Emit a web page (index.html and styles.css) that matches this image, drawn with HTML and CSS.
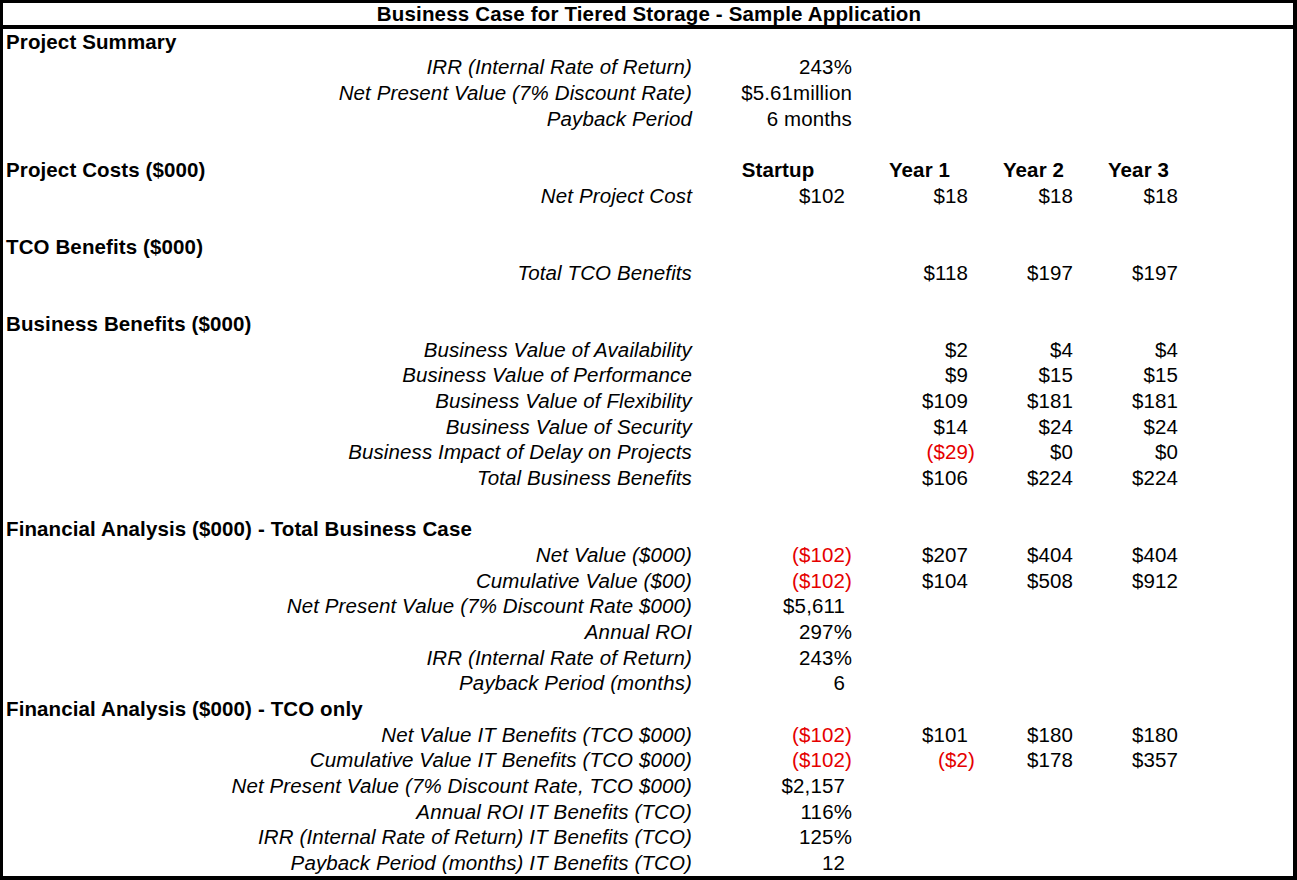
FILE: index.html
```html
<!DOCTYPE html>
<html>
<head>
<meta charset="utf-8">
<link rel="stylesheet" href="styles.css">
</head>
<body>
<div class="sheet">
  <div class="title">Business Case for Tiered Storage - Sample Application</div>
  <div class="grid">
    <div class="sec">Project Summary</div>
    <div class="lbl">IRR (Internal Rate of Return)</div><div class="v c1">243%</div><div class="e"></div>
    <div class="lbl">Net Present Value (7% Discount Rate)</div><div class="v c1">$5.61million</div><div class="e"></div>
    <div class="lbl">Payback Period</div><div class="v c1">6 months</div><div class="e"></div>
    <div class="blank"></div>

    <div class="sec2">Project Costs ($000)</div><div class="hd c1">Startup</div><div class="hd">Year 1</div><div class="hd">Year 2</div><div class="hd">Year 3</div><div></div>
    <div class="lbl">Net Project Cost</div><div class="v acc">$102</div><div class="v acc">$18</div><div class="v acc">$18</div><div class="v acc">$18</div><div></div>
    <div class="blank"></div>

    <div class="sec">TCO Benefits ($000)</div>
    <div class="lbl">Total TCO Benefits</div><div class="v"></div><div class="v acc">$118</div><div class="v acc">$197</div><div class="v acc">$197</div><div></div>
    <div class="blank"></div>

    <div class="sec">Business Benefits ($000)</div>
    <div class="lbl">Business Value of Availability</div><div class="v"></div><div class="v acc">$2</div><div class="v acc">$4</div><div class="v acc">$4</div><div></div>
    <div class="lbl">Business Value of Performance</div><div class="v"></div><div class="v acc">$9</div><div class="v acc">$15</div><div class="v acc">$15</div><div></div>
    <div class="lbl">Business Value of Flexibility</div><div class="v"></div><div class="v acc">$109</div><div class="v acc">$181</div><div class="v acc">$181</div><div></div>
    <div class="lbl">Business Value of Security</div><div class="v"></div><div class="v acc">$14</div><div class="v acc">$24</div><div class="v acc">$24</div><div></div>
    <div class="lbl">Business Impact of Delay on Projects</div><div class="v"></div><div class="v neg">($29)</div><div class="v acc">$0</div><div class="v acc">$0</div><div></div>
    <div class="lbl">Total Business Benefits</div><div class="v"></div><div class="v acc">$106</div><div class="v acc">$224</div><div class="v acc">$224</div><div></div>
    <div class="blank"></div>

    <div class="sec">Financial Analysis ($000) - Total Business Case</div>
    <div class="lbl">Net Value ($000)</div><div class="v neg">($102)</div><div class="v acc">$207</div><div class="v acc">$404</div><div class="v acc">$404</div><div></div>
    <div class="lbl">Cumulative Value ($00)</div><div class="v neg">($102)</div><div class="v acc">$104</div><div class="v acc">$508</div><div class="v acc">$912</div><div></div>
    <div class="lbl">Net Present Value (7% Discount Rate $000)</div><div class="v acc">$5,611</div><div class="e"></div>
    <div class="lbl">Annual ROI</div><div class="v">297%</div><div class="e"></div>
    <div class="lbl">IRR (Internal Rate of Return)</div><div class="v">243%</div><div class="e"></div>
    <div class="lbl">Payback Period (months)</div><div class="v acc">6</div><div class="e"></div>

    <div class="sec">Financial Analysis ($000) - TCO only</div>
    <div class="lbl">Net Value IT Benefits (TCO $000)</div><div class="v neg">($102)</div><div class="v acc">$101</div><div class="v acc">$180</div><div class="v acc">$180</div><div></div>
    <div class="lbl">Cumulative Value IT Benefits (TCO $000)</div><div class="v neg">($102)</div><div class="v neg">($2)</div><div class="v acc">$178</div><div class="v acc">$357</div><div></div>
    <div class="lbl">Net Present Value (7% Discount Rate, TCO $000)</div><div class="v acc">$2,157</div><div class="e"></div>
    <div class="lbl">Annual ROI IT Benefits (TCO)</div><div class="v">116%</div><div class="e"></div>
    <div class="lbl">IRR (Internal Rate of Return) IT Benefits (TCO)</div><div class="v">125%</div><div class="e"></div>
    <div class="lbl">Payback Period (months) IT Benefits (TCO)</div><div class="v acc">12</div><div class="e"></div>
  </div>
</div>
</body>
</html>
```

FILE: styles.css
```css
html, body {
  margin: 0;
  padding: 0;
  background: #fff;
}
body {
  font-family: "Liberation Sans", Arial, sans-serif;
  font-size: 20.5px;
  letter-spacing: 0.12px;
  color: #000;
}
.sheet {
  box-sizing: border-box;
  width: 1297px;
  height: 880px;
  border-style: solid;
  border-color: #000;
  border-width: 3px 4px 4px 3px;
  display: flex;
  flex-direction: column;
  overflow: hidden;
}
.title {
  height: 22px;
  border-bottom: 4px solid #000;
  font-weight: bold;
  text-align: center;
  line-height: 22px;
  letter-spacing: 0.17px;
  padding-left: 2px;
}
.grid {
  display: grid;
  grid-template-columns: 697px 160px 123px 105px 105px 1fr;
  grid-auto-rows: 25.67px;
  align-items: center;
  line-height: 24px;
}
.sec {
  grid-column: 1 / -1;
  font-weight: bold;
  padding-left: 3px;
  white-space: nowrap;
}
.sec2 {
  grid-column: 1 / 2;
  font-weight: bold;
  padding-left: 3px;
  white-space: nowrap;
}
.blank {
  grid-column: 1 / -1;
}
.lbl {
  grid-column: 1 / 2;
  font-style: italic;
  text-align: right;
  padding-right: 8px;
  white-space: nowrap;
}
.v {
  text-align: right;
  padding-right: 8px;
  white-space: nowrap;
}
.v.acc {
  padding-right: 15px;
}
.neg {
  color: #e50000;
}
.hd {
  font-weight: bold;
  text-align: center;
  padding-right: 4px;
}
.e {
  grid-column: 3 / -1;
}
```
